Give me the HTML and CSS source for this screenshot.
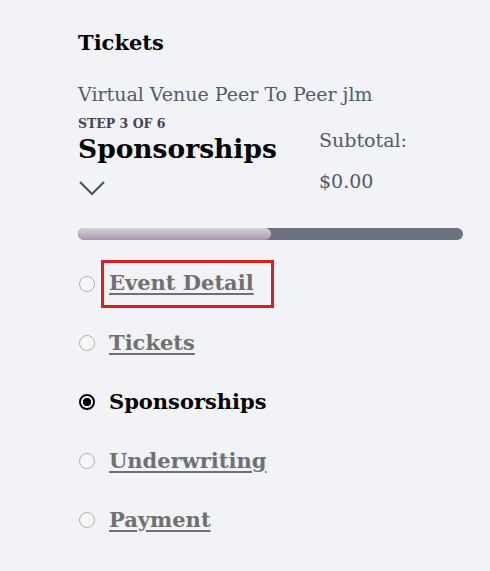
FILE: index.html
```html
<!DOCTYPE html>
<html>
<head>
<meta charset="utf-8">
<link rel="stylesheet" href="styles.css">
</head>
<body>
<div class="panel">
  <h2 class="title">Tickets</h2>
  <p class="event">Virtual Venue Peer To Peer jlm</p>
  <div class="header">
    <div class="step">
      <div class="step-count">STEP 3 OF 6</div>
      <div class="step-name">Sponsorships</div>
      <svg class="chevron" width="28" height="16" viewBox="0 0 28 16"><path d="M2 2 L14 14 L26 2" fill="none" stroke="#4b5563" stroke-width="2.2"/></svg>
    </div>
    <div class="subtotal">
      <div class="sub-label">Subtotal:</div>
      <div class="sub-value">$0.00</div>
    </div>
  </div>
  <div class="progress"><div class="progress-fill" style="width:50%"></div></div>
  <ul class="steps">
    <li class="item"><span class="radio"></span><a class="link boxed" href="#">Event Detail</a></li>
    <li class="item"><span class="radio"></span><a class="link" href="#">Tickets</a></li>
    <li class="item"><span class="radio checked"></span><span class="current">Sponsorships</span></li>
    <li class="item"><span class="radio"></span><a class="link" href="#">Underwriting</a></li>
    <li class="item"><span class="radio"></span><a class="link" href="#">Payment</a></li>
  </ul>
</div>
</body>
</html>
```
FILE: styles.css
```css
html, body {
  margin: 0;
  padding: 0;
  background: #f2f3f7;
}
body {
  font-family: "DejaVu Serif", "Liberation Serif", serif;
}
.panel {
  padding: 30px 27px 0 78px;
}
.title {
  margin: 0;
  font-size: 21px;
  font-weight: bold;
  color: #000;
  line-height: 26px;
}
.event {
  margin: 25px 0 0;
  font-size: 19px;
  color: #515b6b;
  line-height: 26px;
}
.header {
  display: flex;
  margin-top: 9px;
}
.step {
  width: 241px;
}
.step-count {
  font-size: 12.5px;
  font-weight: bold;
  color: #3f4654;
  line-height: 16px;
}
.step-name {
  font-size: 26.5px;
  font-weight: bold;
  color: #000;
  line-height: 34px;
}
.chevron {
  display: block;
  margin-top: 14px;
}
.subtotal {
  padding-top: 11px;
  font-size: 19px;
  color: #515b6b;
}
.sub-label { line-height: 26px; }
.sub-value { margin-top: 15px; line-height: 26px; }
.progress {
  margin-top: 32px;
  height: 12px;
  border-radius: 6px;
  background: #6b7280;
  overflow: hidden;
}
.progress-fill {
  height: 100%;
  border-radius: 6px;
  background: linear-gradient(180deg, #d9d3df 0%, #b9afc3 60%, #a498ae 100%);
}
.steps {
  list-style: none;
  margin: 14px 0 0;
  padding: 0;
}
.item {
  display: flex;
  align-items: center;
  height: 59px;
}
.radio {
  box-sizing: border-box;
  width: 16px;
  height: 16px;
  border: 1.5px solid #b3b3b3;
  border-radius: 50%;
  margin-left: 1px;
  margin-right: 14px;
  background: #f7f7f9;
  flex: none;
}
.radio.checked {
  border: 2px solid #000;
  background: radial-gradient(circle, #000 0 4px, #fff 4.5px);
}
.link {
  font-size: 21px;
  font-weight: bold;
  color: #707070;
  text-decoration: underline;
  text-decoration-thickness: 2px;
  text-underline-offset: 3px;
  line-height: 30px;
}
.boxed {
  outline: 3px solid #e11b22;
  outline-offset: 0;
  padding: 5px 17px 7px 5px;
  margin-left: -5px;
}
.current {
  font-size: 21px;
  font-weight: bold;
  color: #000;
  line-height: 30px;
}
```
